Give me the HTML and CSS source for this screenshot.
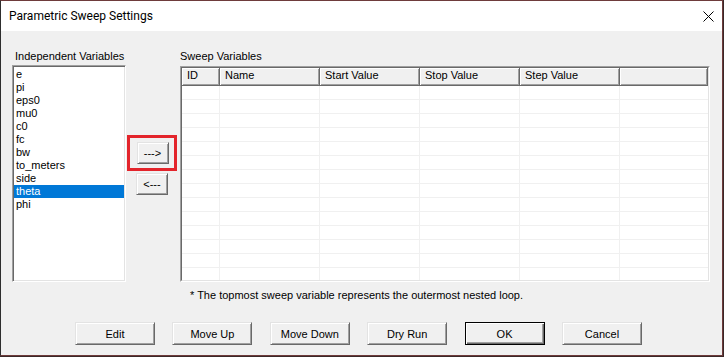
FILE: index.html
```html
<!DOCTYPE html>
<html lang="en">
  <head>
    <meta charset="UTF-8" />
    <title>Parametric Sweep Settings</title>
    <link rel="stylesheet" href="styles.css">
  </head>
  <body>
    <div class="window">
      <div class="titlebar">
        <span class="title">Parametric Sweep Settings</span>
        <svg class="close" width="11" height="11" viewBox="0 0 11 11">
          <path d="M0.5 0.5 L10.5 10.5 M10.5 0.5 L0.5 10.5" stroke="#000" stroke-width="1" fill="none" />
        </svg>
      </div>

      <div class="content">
        <div class="main">
          <div class="col-left">
            <div class="label">Independent Variables</div>
            <div class="listbox">
              <div class="item">e</div>
              <div class="item">pi</div>
              <div class="item">eps0</div>
              <div class="item">mu0</div>
              <div class="item">c0</div>
              <div class="item">fc</div>
              <div class="item">bw</div>
              <div class="item">to_meters</div>
              <div class="item">side</div>
              <div class="item selected">theta</div>
              <div class="item">phi</div>
            </div>
          </div>

          <div class="col-mid">
            <div class="highlight">
              <button class="btn btn-arrow">---&gt;</button>
            </div>
            <button class="btn btn-arrow">&lt;---</button>
          </div>

          <div class="col-right">
            <div class="label label-sweep">Sweep Variables</div>
            <div class="grid-outer">
              <div class="grid-inner">
                <table class="grid">
                  <colgroup>
                    <col style="width: 38px" />
                    <col style="width: 100px" />
                    <col style="width: 100px" />
                    <col style="width: 100px" />
                    <col style="width: 100px" />
                    <col />
                  </colgroup>
                  <thead>
                    <tr>
                      <th>ID</th>
                      <th>Name</th>
                      <th>Start Value</th>
                      <th>Stop Value</th>
                      <th>Step Value</th>
                      <th></th>
                    </tr>
                  </thead>
                  <tbody>
                    <tr><td></td><td></td><td></td><td></td><td></td><td></td></tr>
                    <tr><td></td><td></td><td></td><td></td><td></td><td></td></tr>
                    <tr><td></td><td></td><td></td><td></td><td></td><td></td></tr>
                    <tr><td></td><td></td><td></td><td></td><td></td><td></td></tr>
                    <tr><td></td><td></td><td></td><td></td><td></td><td></td></tr>
                    <tr><td></td><td></td><td></td><td></td><td></td><td></td></tr>
                    <tr><td></td><td></td><td></td><td></td><td></td><td></td></tr>
                    <tr><td></td><td></td><td></td><td></td><td></td><td></td></tr>
                    <tr><td></td><td></td><td></td><td></td><td></td><td></td></tr>
                    <tr><td></td><td></td><td></td><td></td><td></td><td></td></tr>
                    <tr><td></td><td></td><td></td><td></td><td></td><td></td></tr>
                    <tr><td></td><td></td><td></td><td></td><td></td><td></td></tr>
                    <tr><td></td><td></td><td></td><td></td><td></td><td></td></tr>
                    <tr><td></td><td></td><td></td><td></td><td></td><td></td></tr>
                  </tbody>
                </table>
              </div>
            </div>
          </div>
        </div>

        <div class="note">* The topmost sweep variable represents the outermost nested loop.</div>

        <div class="actions">
          <button class="btn">Edit</button>
          <button class="btn">Move Up</button>
          <button class="btn">Move Down</button>
          <button class="btn">Dry Run</button>
          <button class="btn btn-default">OK</button>
          <button class="btn">Cancel</button>
        </div>
      </div>
    </div>
  </body>
</html>
```

FILE: styles.css
```css
html,
body {
  margin: 0;
  background: #3a2828;
}
body {
  font-family: "Liberation Sans", Arial, sans-serif;
  font-size: 11px;
  line-height: 13px;
  color: #000;
}
.window {
  box-sizing: border-box;
  width: 723px;
  height: 356px;
  border: 1px solid #6e3b3b;
  border-left-color: #2e2e2e;
  background: #f0f0f0;
  display: flex;
  flex-direction: column;
}
.titlebar {
  height: 30px;
  background: #fff;
  display: flex;
  align-items: center;
  padding-left: 8px;
}
.title {
  font-family: Roboto, "Noto Sans", sans-serif;
  font-size: 12px;
  color: #000;
}
.close {
  margin-left: auto;
  margin-right: 8px;
}
.content {
  padding: 19px 0 0 11px;
}
.main {
  display: flex;
  align-items: flex-start;
}
.label {
  height: 13px;
  padding-left: 3px;
  margin-bottom: 2px;
}
.label-sweep {
  padding-left: 0;
  margin-bottom: 3px;
}
.col-left {
  width: 114px;
}
.listbox {
  box-sizing: border-box;
  height: 217px;
  border: 1px solid;
  border-color: #a0a0a0 #fff #fff #a0a0a0;
  background: #fff;
  box-shadow: inset 1px 1px #696969, inset -1px -1px #e3e3e3;
  padding: 2px 1px 0 1px;
}
.item {
  height: 13px;
  padding-left: 2px;
  white-space: nowrap;
}
.item.selected {
  background: #0078d7;
  color: #fff;
}
.col-mid {
  width: 49px;
  margin-left: 1px;
  margin-right: 4px;
  padding-top: 85px;
  display: flex;
  flex-direction: column;
  align-items: center;
}
.highlight {
  border: 3px solid #e3242b;
  padding: 4px 5px 4px 6px;
  margin-bottom: 2px;
}
.btn {
  box-sizing: border-box;
  width: 80px;
  height: 23px;
  padding: 0;
  margin: 0;
  font-family: "Liberation Sans", Arial, sans-serif;
  font-size: 11px;
  color: #000;
  background: #f0f0f0;
  border: 1px solid;
  border-color: #e3e3e3 #696969 #696969 #e3e3e3;
  box-shadow: inset 1px 1px #fff, inset -1px -1px #a0a0a0;
  cursor: pointer;
}
.btn-arrow {
  width: 32px;
  height: 22px;
  margin-left: 1px;
}
.btn-default {
  border-color: #000;
  box-shadow: inset 1px 1px #fff, inset -1px -1px #696969, inset -2px -2px #a0a0a0;
}
.col-right {
  width: 530px;
}
.grid-outer {
  box-sizing: border-box;
  height: 216px;
  border: 1px solid;
  border-color: #a0a0a0 #fff #fff #a0a0a0;
}
.grid-inner {
  height: 100%;
  box-sizing: border-box;
  border: 1px solid;
  border-color: #696969 #e3e3e3 #e3e3e3 #696969;
  background: #fff;
  overflow: hidden;
}
.grid {
  width: 100%;
  table-layout: fixed;
  border-collapse: separate;
  border-spacing: 0;
}
.grid th {
  box-sizing: border-box;
  height: 18px;
  padding: 1px 0 0 5px;
  text-align: left;
  font-weight: normal;
  vertical-align: top;
  background: #f0f0f0;
  border-right: 1px solid #696969;
  border-bottom: 1px solid #696969;
  box-shadow: inset 1px 1px #fff, inset -1px -1px #a0a0a0;
  white-space: nowrap;
}
.grid td {
  box-sizing: border-box;
  height: 14px;
  padding: 0;
  border-right: 1px solid #f0f0f0;
  border-bottom: 1px solid #f0f0f0;
}
.grid td:last-child {
  border-right: none;
}
.note {
  margin-top: 7px;
  padding-left: 178px;
  height: 13px;
}
.actions {
  margin-top: 20px;
  padding-left: 63px;
  display: flex;
  gap: 17.4px;
}
```
